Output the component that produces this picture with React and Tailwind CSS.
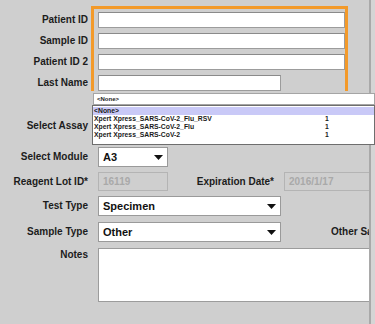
import React from "react";

function Arrow() {
  return (
    <svg width="9" height="5" viewBox="0 0 9 5" className="shrink-0">
      <polygon points="0,0 9,0 4.5,5" fill="#111" />
    </svg>
  );
}

function Label({ children, w = "w-[88px]", extra = "" }) {
  return (
    <div className={`${w} shrink-0 text-right text-[10px] font-bold text-[#1c1c1c] leading-none whitespace-nowrap ${extra}`}>
      {children}
    </div>
  );
}

function Combo({ text, w }) {
  return (
    <div className={`${w} h-full bg-white border border-[#9a9a9a] flex items-center justify-between pl-[4px] pr-[4px]`}>
      <span className="text-[11px] font-bold text-[#111] leading-none">{text}</span>
      <Arrow />
    </div>
  );
}

export default function App() {
  const input = "h-[16px] bg-white border border-[#9c9c9c] border-t-[#8a8a8a]";
  return (
    <div
      className="relative w-[375px] h-[324px] overflow-hidden bg-[#cfcfcf] flex"
      style={{ fontFamily: '"Liberation Sans", Arial, sans-serif' }}
    >
      <div className="w-[369px] h-full overflow-hidden flex flex-col shrink-0">
        {/* highlighted block */}
        <div className="flex pt-[6px]">
          <div className="w-[91px] flex flex-col gap-[5px] pt-[6px] pr-[3px]">
            {["Patient ID", "Sample ID", "Patient ID 2", "Last Name"].map((t) => (
              <div key={t} className="h-[16px] flex items-center justify-end text-[10px] font-bold text-[#1c1c1c] leading-none">
                {t}
              </div>
            ))}
          </div>
          <div className="w-[257px] border-t-[3px] border-x-[3px] border-[#f39a2a] pt-[3px] pl-[4px] flex flex-col gap-[5px]">
            <div className={`${input} w-full`} />
            <div className={`${input} w-full`} />
            <div className={`${input} w-full`} />
            <div className={`${input} w-[183px]`} />
          </div>
        </div>

        {/* Select Assay */}
        <div className="mt-[25px] h-[20px] flex items-center">
          <Label>Select Assay</Label>
          <div className="ml-[10px] h-full shrink-0">
            <Combo text="" w="w-[183px]" />
          </div>
        </div>

        {/* Select Module */}
        <div className="mt-[11px] h-[20px] flex items-center">
          <Label>Select Module</Label>
          <div className="ml-[10px] h-full shrink-0">
            <Combo text="A3" w="w-[70px]" />
          </div>
        </div>

        {/* Reagent Lot */}
        <div className="mt-[5px] h-[19px] flex items-center">
          <Label>Reagent Lot ID*</Label>
          <div className="ml-[10px] h-full w-[70px] shrink-0 border border-[#b4b4b4] flex items-center pl-[4px]">
            <span className="text-[10px] font-bold text-[#a9a9a9] leading-none">16119</span>
          </div>
          <Label w="w-[106px]">Expiration Date*</Label>
          <div className="ml-[10px] h-full w-[85px] shrink-0 border border-[#b4b4b4] border-r-0 flex items-center pl-[4px]">
            <span className="text-[10px] font-bold text-[#a9a9a9] leading-none">2016/1/17</span>
          </div>
        </div>

        {/* Test Type */}
        <div className="mt-[5px] h-[20px] flex items-center">
          <Label>Test Type</Label>
          <div className="ml-[10px] h-full shrink-0">
            <Combo text="Specimen" w="w-[183px]" />
          </div>
        </div>

        {/* Sample Type */}
        <div className="mt-[6px] h-[20px] flex items-center">
          <Label>Sample Type</Label>
          <div className="ml-[10px] h-full shrink-0">
            <Combo text="Other" w="w-[183px]" />
          </div>
          <div className="ml-[50px] w-[38px] shrink-0 overflow-hidden whitespace-nowrap text-[10px] font-bold text-[#1c1c1c] leading-none">
            Other Sample Type
          </div>
        </div>

        {/* Notes */}
        <div className="mt-[6px] h-[54px] flex items-start">
          <Label extra="pt-[2px]">Notes</Label>
          <div className="ml-[10px] h-full flex-1 bg-white border border-[#9c9c9c] border-r-0" />
        </div>
      </div>

      <div className="flex-1 h-full border-l-2 border-[#a9a9a9] bg-[#d5d5d5]" />

      {/* assay dropdown popup */}
      <div className="absolute left-[92px] top-[93px] w-[283px]">
        <div className="ml-[1px] h-[12px] bg-white border border-[#a5a5a5] flex items-center pl-[3px]">
          <span className="text-[6px] font-bold text-[#222] leading-none">&lt;None&gt;</span>
        </div>
        <div className="h-[40px] bg-white border border-[#6e6e6e] pt-[1px]">
          {[
            ["<None>", ""],
            ["Xpert Xpress_SARS-CoV-2_Flu_RSV", "1"],
            ["Xpert Xpress_SARS-CoV-2_Flu", "1"],
            ["Xpert Xpress_SARS-CoV-2", "1"],
          ].map(([n, c], i) => (
            <div
              key={n}
              className={`h-[8px] flex items-center ${i === 0 ? "bg-[#c9c9f7]" : ""}`}
            >
              <span className="w-[232px] pl-[1px] text-[6.8px] font-bold text-[#1a1a1a] leading-none whitespace-nowrap">
                {n}
              </span>
              <span className="text-[6.8px] font-bold text-[#1a1a1a] leading-none">{c}</span>
            </div>
          ))}
        </div>
      </div>
    </div>
  );
}
